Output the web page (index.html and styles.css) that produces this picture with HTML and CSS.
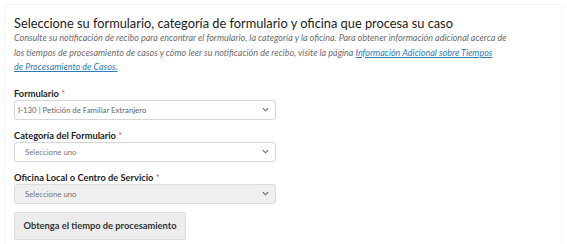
FILE: index.html
```html
<!DOCTYPE html>
<html lang="es">
<head>
<meta charset="utf-8">
<link rel="stylesheet" href="styles.css">
</head>
<body>
<div class="frame">
  <h1 class="title">Seleccione su formulario, categoría de formulario y oficina que procesa su caso</h1>
  <p class="intro">Consulte su notificación de recibo para encontrar el formulario, la categoría y la oficina. Para obtener información adicional acerca de los tiempos de procesamiento de casos y cómo leer su notificación de recibo, visite la página <a href="#" class="link">Información Adicional sobre Tiempos de&nbsp;Procesamiento de Casos.</a></p>
  <form class="form">
    <div class="field">
      <label class="label">Formulario <span class="req">*</span></label>
      <div class="select filled"><span class="value">I-130 | Petición de Familiar Extranjero</span><svg class="chev" viewBox="0 0 8 5" width="7" height="5"><path d="M1 1 L4 4 L7 1" fill="none" stroke="#666" stroke-width="1.3"/></svg></div>
    </div>
    <div class="field">
      <label class="label">Categoría del Formulario <span class="req">*</span></label>
      <div class="select"><span class="value placeholder">Seleccione uno</span><svg class="chev" viewBox="0 0 8 5" width="7" height="5"><path d="M1 1 L4 4 L7 1" fill="none" stroke="#666" stroke-width="1.3"/></svg></div>
    </div>
    <div class="field">
      <label class="label">Oficina Local o Centro de Servicio <span class="req">*</span></label>
      <div class="select disabled"><span class="value placeholder">Seleccione uno</span><svg class="chev" viewBox="0 0 8 5" width="7" height="5"><path d="M1 1 L4 4 L7 1" fill="none" stroke="#666" stroke-width="1.3"/></svg></div>
    </div>
    <div class="actions">
      <button type="button" class="btn">Obtenga el tiempo de procesamiento</button>
    </div>
  </form>
</div>
</body>
</html>
```

FILE: styles.css
```css
html, body {
  margin: 0;
  padding: 0;
  background: #ffffff;
}
body {
  width: 567px;
  height: 244px;
  overflow: hidden;
  font-family: Lato, "Open Sans", sans-serif;
  color: #222;
}
.frame {
  margin: 4px 5px 0 4px;
  height: 240px;
  box-sizing: border-box;
  border: 1px solid #f3f3f3;
  border-bottom: none;
  padding: 10px 9px 0 9px;
}
.title {
  margin: 0;
  font-size: 12.8px;
  font-weight: 400;
  line-height: 16px;
  color: #1b1b1b;
}
.intro {
  margin: 0;
  width: 498px;
  font-size: 9px;
  line-height: 14.5px;
  font-style: italic;
  color: #6b6b6b;
}
.link {
  color: #2e7bb5;
  text-decoration: underline;
}
.form {
  margin-top: 13px;
  display: flex;
  flex-direction: column;
}
.field {
  display: flex;
  flex-direction: column;
  margin-bottom: 10px;
}
.label {
  font-size: 9.3px;
  font-weight: 700;
  line-height: 12px;
  color: #1e1e1e;
}
.req {
  color: #d9534f;
  font-weight: 400;
}
.select {
  width: 262px;
  height: 20px;
  box-sizing: border-box;
  border: 1px solid #d6d6d6;
  border-radius: 3px;
  background: #fff;
  display: flex;
  align-items: center;
  justify-content: space-between;
  padding: 0 6px 0 10px;
}
.select.filled {
  padding-left: 3px;
}
.select.disabled {
  background: #efefef;
  border-color: #dcdcdc;
}
.value {
  font-size: 7.8px;
  color: #666;
}
.placeholder {
  color: #777;
}
.chev {
  display: block;
}
.actions {
  margin-top: -2px;
}
.btn {
  display: block;
  width: 172px;
  height: 28px;
  border: 1px solid #dcdcdc;
  border-radius: 2px;
  background: #ececec;
  font-family: Lato, sans-serif;
  font-size: 9.3px;
  font-weight: 700;
  color: #333;
  padding: 0;
}
```
